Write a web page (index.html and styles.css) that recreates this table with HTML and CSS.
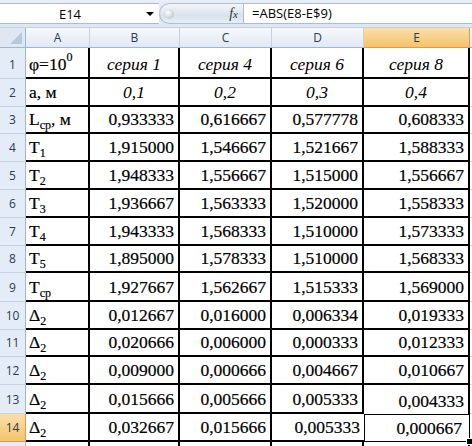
FILE: index.html
```html
<!DOCTYPE html>
<html>
<head>
<meta charset="utf-8">
<link rel="stylesheet" href="styles.css">
</head>
<body>
<div class="app">
  <div class="fbar">
    <div class="namebox"><span class="ref">E14</span><span class="drop"></span></div>
    <div class="pill"><span class="knob"></span><span class="fx">f<span class="x">x</span></span></div>
    <div class="formula">=ABS(E8-E$9)</div>
  </div>
  <div class="sheet">
    <div class="corner"><span class="tri"></span></div>
    <div class="ch">A</div>
    <div class="ch">B</div>
    <div class="ch">C</div>
    <div class="ch">D</div>
    <div class="ch on">E</div>
    <div class="ch edge"></div>

    <div class="rh">1</div>
    <div class="c lbl"><span>φ=10<sup>0</sup></span></div>
    <div class="c t">серия 1</div>
    <div class="c t">серия 4</div>
    <div class="c t">серия 6</div>
    <div class="c t">серия 8</div>
    <div class="g"></div>

    <div class="rh">2</div>
    <div class="c lbl"><span>a, м</span></div>
    <div class="c t">0,1</div>
    <div class="c t">0,2</div>
    <div class="c t">0,3</div>
    <div class="c t">0,4</div>
    <div class="g"></div>

    <div class="rh">3</div>
    <div class="c lbl"><span>L<sub>ср</sub>, м</span></div>
    <div class="c">0,933333</div>
    <div class="c">0,616667</div>
    <div class="c">0,577778</div>
    <div class="c">0,608333</div>
    <div class="g"></div>

    <div class="rh">4</div>
    <div class="c lbl"><span>T<sub>1</sub></span></div>
    <div class="c">1,915000</div>
    <div class="c">1,546667</div>
    <div class="c">1,521667</div>
    <div class="c">1,588333</div>
    <div class="g"></div>

    <div class="rh">5</div>
    <div class="c lbl"><span>T<sub>2</sub></span></div>
    <div class="c">1,948333</div>
    <div class="c">1,556667</div>
    <div class="c">1,515000</div>
    <div class="c">1,556667</div>
    <div class="g"></div>

    <div class="rh">6</div>
    <div class="c lbl"><span>T<sub>3</sub></span></div>
    <div class="c">1,936667</div>
    <div class="c">1,563333</div>
    <div class="c">1,520000</div>
    <div class="c">1,558333</div>
    <div class="g"></div>

    <div class="rh">7</div>
    <div class="c lbl"><span>T<sub>4</sub></span></div>
    <div class="c">1,943333</div>
    <div class="c">1,568333</div>
    <div class="c">1,510000</div>
    <div class="c">1,573333</div>
    <div class="g"></div>

    <div class="rh">8</div>
    <div class="c lbl"><span>T<sub>5</sub></span></div>
    <div class="c">1,895000</div>
    <div class="c">1,578333</div>
    <div class="c">1,510000</div>
    <div class="c">1,568333</div>
    <div class="g"></div>

    <div class="rh">9</div>
    <div class="c lbl"><span>T<sub>ср</sub></span></div>
    <div class="c">1,927667</div>
    <div class="c">1,562667</div>
    <div class="c">1,515333</div>
    <div class="c">1,569000</div>
    <div class="g"></div>

    <div class="rh">10</div>
    <div class="c lbl"><span>Δ<sub>2</sub></span></div>
    <div class="c">0,012667</div>
    <div class="c">0,016000</div>
    <div class="c">0,006334</div>
    <div class="c">0,019333</div>
    <div class="g"></div>

    <div class="rh">11</div>
    <div class="c lbl"><span>Δ<sub>2</sub></span></div>
    <div class="c">0,020666</div>
    <div class="c">0,006000</div>
    <div class="c">0,000333</div>
    <div class="c">0,012333</div>
    <div class="g"></div>

    <div class="rh">12</div>
    <div class="c lbl"><span>Δ<sub>2</sub></span></div>
    <div class="c">0,009000</div>
    <div class="c">0,000666</div>
    <div class="c">0,004667</div>
    <div class="c">0,010667</div>
    <div class="g"></div>

    <div class="rh">13</div>
    <div class="c lbl"><span>Δ<sub>2</sub></span></div>
    <div class="c">0,015666</div>
    <div class="c">0,005666</div>
    <div class="c">0,005333</div>
    <div class="c nb">0,004333</div>
    <div class="g"></div>

    <div class="rh on">14</div>
    <div class="c lbl"><span>Δ<sub>2</sub></span></div>
    <div class="c">0,032667</div>
    <div class="c">0,015666</div>
    <div class="c nr">0,005333</div>
    <div class="c sel">0,000667<span class="handle"></span></div>
    <div class="g"></div>

    <div class="rh"></div>
    <div class="c lbl"></div>
    <div class="c"></div>
    <div class="c"></div>
    <div class="c"></div>
    <div class="c"></div>
    <div class="g"></div>
  </div>
</div>
</body>
</html>
```

FILE: styles.css
```css
html, body {
  margin: 0;
  padding: 0;
}
body {
  width: 472px;
  height: 446px;
  overflow: hidden;
  background: #ffffff;
}
.app {
  width: 472px;
  height: 446px;
  overflow: hidden;
}

/* formula bar */
.fbar {
  height: 28px;
  box-sizing: border-box;
  padding: 3px 0 4px;
  display: flex;
  background: linear-gradient(#e9eef6, #dfe7f2);
  border-bottom: 1px solid #c3d1e3;
}
.namebox {
  width: 159px;
  height: 21px;
  box-sizing: border-box;
  background: #fff;
  border-top: 1px solid #a9bdd6;
  border-bottom: 1px solid #a9bdd6;
  display: flex;
  align-items: center;
}
.ref {
  width: 140px;
  text-align: center;
  font: 13px "Open Sans", sans-serif;
  color: #000;
}
.drop {
  width: 0;
  height: 0;
  margin-left: 6px;
  border-left: 4px solid transparent;
  border-right: 4px solid transparent;
  border-top: 4px solid #000;
}
.pill {
  width: 84px;
  height: 21px;
  box-sizing: border-box;
  border: 1px solid #aebfd5;
  border-right: none;
  border-radius: 11px 0 0 11px;
  background: linear-gradient(#f3f6fa, #d9e2ed 60%, #e7edf5);
  display: flex;
  align-items: center;
  justify-content: space-between;
  padding: 0 5px 0 4px;
}
.knob {
  width: 10px;
  height: 10px;
  border-radius: 50%;
  background: radial-gradient(circle at 40% 35%, #ffffff, #aeb8c4);
}
.fx {
  font: italic 14px "Liberation Serif", "DejaVu Serif", serif;
  color: #333;
}
.fx .x {
  font-size: 11px;
}
.formula {
  flex: 1;
  height: 21px;
  box-sizing: border-box;
  background: #fff;
  border: 1px solid #a9bdd6;
  border-right: none;
  padding-left: 8px;
  font: 13px/19px "Open Sans", sans-serif;
  color: #000;
}

/* sheet */
.sheet {
  display: grid;
  grid-template-columns: 26px 64px 90px 92px 92px 106px 2px;
  grid-template-rows: 20px 31px 28px 27px 28px 28px 28px 28px 27px 29px 28px 27px 28px 29px 28px 20px;
}
.corner {
  background: #dfe7f2;
  border-right: 1px solid #9eb6ce;
  border-bottom: 1px solid #9eb6ce;
  box-sizing: border-box;
  position: relative;
}
.tri {
  position: absolute;
  right: 3px;
  bottom: 3px;
  width: 0;
  height: 0;
  border-left: 12px solid transparent;
  border-bottom: 12px solid #b9c9dc;
}
.ch {
  box-sizing: border-box;
  background: linear-gradient(#f6f8fc, #e1e9f4);
  border-right: 1px solid #c5d2e2;
  border-bottom: 1px solid #9eb6ce;
  display: flex;
  align-items: center;
  justify-content: center;
  font: 12px "Open Sans", sans-serif;
  color: #2b3b50;
}
.ch.on {
  background: linear-gradient(#f9dfae, #f3c46a);
  border-right: 1px solid #f29536;
  border-bottom: 1px solid #f29536;
}
.ch.edge {
  border-right: none;
}
.rh {
  box-sizing: border-box;
  background: #e4ecf7;
  border-right: 1px solid #9eb6ce;
  border-bottom: 1px solid #c5d2e2;
  display: flex;
  align-items: flex-end;
  justify-content: center;
  padding-bottom: 5px;
  font: 12px "Open Sans", sans-serif;
  color: #2b3b50;
}
.rh.on {
  background: linear-gradient(#f9dfae, #f3c46a);
  border-right: 1px solid #f29536;
  border-bottom: 1px solid #f29536;
}
.c {
  box-sizing: border-box;
  border-right: 2px solid #000;
  border-bottom: 2px solid #000;
  display: flex;
  align-items: flex-end;
  justify-content: flex-end;
  padding: 0 4px 3px 0;
  font-family: "Liberation Serif", "Times New Roman", "DejaVu Serif", serif;
  font-size: 17.5px;
  line-height: 20px;
  color: #000;
  white-space: nowrap;
  -webkit-text-stroke: 0.2px #000;
}
.c.t {
  justify-content: center;
  font-style: italic;
  padding-right: 0;
  -webkit-text-stroke: 0;
}
.c.lbl {
  justify-content: flex-start;
  padding-left: 3px;
}
.c sub {
  font-size: 12px;
  line-height: 0;
  vertical-align: -4px;
}
.c sup {
  font-size: 12px;
  line-height: 0;
  vertical-align: 9px;
}
.c.nb {
  border-bottom: none;
}
.c.nr {
  border-right: none;
}
.c.sel {
  position: relative;
  border: 1px solid #000;
  padding-right: 7px;
  padding-bottom: 3px;
}
.handle {
  position: absolute;
  right: -4px;
  bottom: -4px;
  width: 5px;
  height: 5px;
  background: #000;
  border: 1px solid #fff;
}
.g {
  border-bottom: 1px solid #d0d7e5;
  box-sizing: border-box;
}
```
